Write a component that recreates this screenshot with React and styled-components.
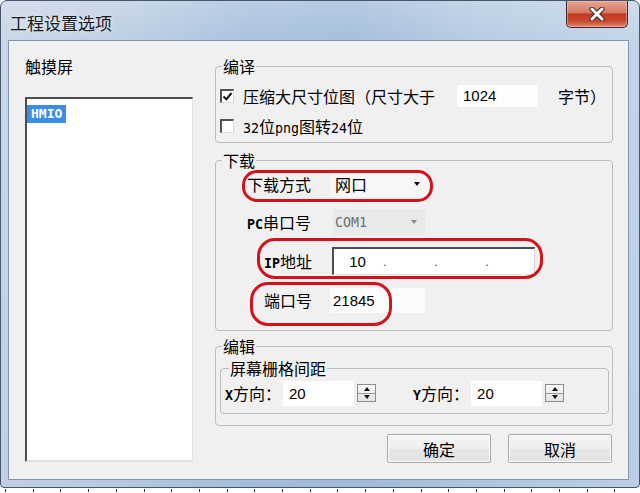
import React from "react";
import styled, { createGlobalStyle } from "styled-components";

const CJK = `"Noto Sans CJK SC", "Noto Sans", sans-serif`;
const MONO = `"DejaVu Sans Mono", "Liberation Mono", monospace`;
const NUM = `"Liberation Sans", Arial, sans-serif`;

const GlobalStyle = createGlobalStyle`
  html, body { margin: 0; padding: 0; background: #ffffff; }
  body { font-family: ${CJK}; width: 640px; height: 493px; overflow: hidden; color: #000; }
  * { box-sizing: border-box; }
`;

const Page = styled.div`
  width: 640px;
  height: 493px;
  display: flex;
  flex-direction: column;
`;

const Window = styled.div`
  position: relative;
  width: 640px;
  height: 488px;
  border: 1px solid #45566d;
  border-radius: 7px 7px 4px 4px;
  background:
    linear-gradient(to bottom, rgba(255,255,255,0.18), rgba(255,255,255,0) 40px, rgba(80,120,180,0.08) 100%),
    linear-gradient(to right, #cbd7e6 0%, #bfd0e4 18%, #abc3df 38%, #a6bfdc 55%, #b8cce3 75%, #c4d5e9 100%);
  display: flex;
  flex-direction: column;
  overflow: hidden;
`;

const TitleBar = styled.div`
  height: 39px;
  flex: none;
  display: flex;
  align-items: flex-start;
`;

const Title = styled.div`
  margin: 12px 0 0 9px;
  font-size: 17px;
  line-height: 20px;
  color: #1b1b1b;
  text-shadow: 0 0 6px rgba(255, 255, 255, 0.8);
`;

const CloseButton = styled.div`
  margin-left: auto;
  margin-right: 11px;
  width: 62px;
  height: 27px;
  border: 1px solid #3d2a2a;
  border-top: none;
  border-radius: 0 0 5px 5px;
  background: linear-gradient(to bottom, #e9a493 0%, #d57a65 44%, #c23a20 50%, #c84a31 78%, #e08a72 100%);
  box-shadow: inset 0 0 0 1px rgba(255, 200, 190, 0.45);
  display: flex;
  align-items: center;
  justify-content: center;
`;

const Client = styled.div`
  flex: 1;
  margin: 0 10px 7px 7px;
  border: 1px solid #8296ae;
  background: #f0f0f0;
  display: flex;
`;

const LeftPanel = styled.div`
  width: 206px;
  flex: none;
  padding: 16px 0 0 16px;
  display: flex;
  flex-direction: column;
`;

const PanelLabel = styled.div`
  font-size: 16px;
  line-height: 18px;
`;

const ListBox = styled.div`
  margin-top: 22px;
  width: 168px;
  height: 365px;
  background: #ffffff;
  border-top: 2px solid #4e4e4e;
  border-left: 2px solid #4e4e4e;
  border-right: 1px solid #e2e2e2;
  border-bottom: 2px solid #e2e2e2;
`;

const ListItem = styled.div`
  display: inline-block;
  height: 18px;
  line-height: 18px;
  padding: 0 4px;
  background: ${(p) => (p.$selected ? "#3a8ee6" : "transparent")};
  color: ${(p) => (p.$selected ? "#ffffff" : "#000")};
  font-family: ${MONO};
  font-weight: bold;
  font-size: 13px;
`;

const RightCol = styled.div`
  width: 398px;
  flex: none;
  padding-top: 16px;
  display: flex;
  flex-direction: column;
`;

const Group = styled.fieldset`
  margin: ${(p) => p.$mt || 0}px ${(p) => p.$mr || 0}px 0 0;
  padding: ${(p) => p.$pt || 0}px 0 ${(p) => p.$pb || 0}px 4px;
  border: 1px solid #bdbdbd;
  border-radius: 4px;
  min-width: 0;
`;

const Legend = styled.legend`
  font-size: 16px;
  line-height: 18px;
  padding: 0 1px;
  margin-left: ${(p) => p.$ml || 2}px;
`;

const CheckRow = styled.div`
  height: 30px;
  display: flex;
  align-items: center;
  font-size: 16px;
  white-space: nowrap;
`;

const CheckBox = styled.div`
  width: 14px;
  height: 14px;
  flex: none;
  background: #ffffff;
  border-top: 2px solid #505050;
  border-left: 2px solid #505050;
  border-right: 1px solid #dcdcdc;
  border-bottom: 1px solid #dcdcdc;
  display: flex;
  align-items: center;
  justify-content: center;
  margin-right: 9px;
`;

const Latin = styled.span`
  font-family: ${MONO};
  font-size: 13.3px;
  font-weight: ${(p) => (p.$bold ? "bold" : "normal")};
`;

const SizeInput = styled.div`
  margin-left: 22px;
  width: 81px;
  height: 22px;
  background: #fdfdfd;
  font-family: ${NUM};
  font-size: 15px;
  line-height: 22px;
  padding-left: 6px;
`;

const Suffix = styled.span`
  margin-left: 20px;
`;

const FormRow = styled.div`
  display: grid;
  grid-template-columns: 110px auto;
  align-items: center;
  height: ${(p) => p.$h || 26}px;
  margin-top: ${(p) => p.$mt || 0}px;
  font-size: 16px;
`;

const FormLabel = styled.div`
  padding-left: ${(p) => p.$indent}px;
  white-space: nowrap;
`;

const Combo = styled.div`
  display: flex;
  align-items: center;
  justify-content: space-between;
  height: 26px;
  width: ${(p) => (p.$disabled ? 92 : 98)}px;
  margin-left: ${(p) => (p.$disabled ? 3 : 0)}px;
  padding: 0 8px 0 ${(p) => (p.$disabled ? 2 : 5)}px;
  background: ${(p) => (p.$disabled ? "#e9e9e9" : "#f7f7f7")};
  color: ${(p) => (p.$disabled ? "#6e6e6e" : "#000")};
`;

const DownArrow = styled.span`
  width: 0;
  height: 0;
  border-left: 3.5px solid transparent;
  border-right: 3.5px solid transparent;
  border-top: 4px solid ${(p) => (p.$disabled ? "#8a8a8a" : "#111")};
`;

const IpBox = styled.div`
  margin-left: 2px;
  width: 203px;
  height: 28px;
  background: #ffffff;
  border-top: 2px solid #4d4d4d;
  border-left: 2px solid #4d4d4d;
  border-right: 1px solid #d4d4d4;
  border-bottom: 1px solid #e6e6e6;
  display: grid;
  grid-template-columns: 1fr 4px 1fr 4px 1fr 4px 1fr;
  align-items: center;
  font-family: ${NUM};
  font-size: 15px;
`;

const IpSeg = styled.span`
  text-align: center;
`;

const IpDot = styled.span`
  text-align: center;
  font-size: 12px;
  color: #333;
  transform: translateX(2px);
`;

const PortInput = styled.div`
  width: 95px;
  height: 25px;
  background: #fbfbfb;
  font-family: ${NUM};
  font-size: 15px;
  line-height: 25px;
  padding-left: 3px;
`;

const SpacingRow = styled.div`
  height: 24px;
  display: flex;
  align-items: center;
  font-size: 16px;
  white-space: nowrap;
`;

const SpacingField = styled.div`
  display: flex;
  align-items: center;
  margin-left: ${(p) => p.$ml || 0}px;
`;

const NumInput = styled.div`
  margin-left: 2px;
  width: 71px;
  height: 25px;
  background: #ffffff;
  font-family: ${NUM};
  font-size: 15px;
  line-height: 25px;
  padding-left: 6px;
`;

const Spin = styled.div`
  margin-left: 3px;
  width: 19px;
  height: 18px;
  border: 1px solid #8c8c8c;
  background: linear-gradient(to bottom, #f8f8f8, #e3e3e3);
  display: flex;
  flex-direction: column;
`;

const SpinHalf = styled.div`
  flex: 1;
  display: flex;
  align-items: center;
  justify-content: center;
  border-top: ${(p) => (p.$down ? "1px solid #9a9a9a" : "none")};
`;

const Tri = styled.span`
  width: 0;
  height: 0;
  border-left: 3.5px solid transparent;
  border-right: 3.5px solid transparent;
  ${(p) => (p.$down ? "border-top: 4px solid #111;" : "border-bottom: 4px solid #111;")}
`;

const ButtonRow = styled.div`
  margin-top: 8px;
  display: flex;
  justify-content: flex-end;
  gap: 17px;
  padding-right: 1px;
`;

const Button = styled.div`
  width: 104px;
  height: 29px;
  border: 1px solid #a9a9a9;
  border-radius: 2px;
  background: linear-gradient(to bottom, #f6f6f6 0%, #eeeeee 50%, #e6e6e6 51%, #e2e2e2 100%);
  box-shadow: inset 0 0 0 1px #fbfbfb;
  display: flex;
  align-items: center;
  justify-content: center;
  font-size: 16px;
`;

const Annotation = styled.div`
  position: absolute;
  border: 3px solid #d3121d;
  pointer-events: none;
`;

const Ticks = styled.div`
  height: 5px;
  background:
    repeating-linear-gradient(to right, transparent 0, transparent 5px, #2a2a2a 5px, #2a2a2a 6px, transparent 6px, transparent 27.7px);
  background-size: 100% 3px;
  background-position: 0 1px;
  background-repeat: repeat-x;
`;

function CloseX() {
  return (
    <svg width="20" height="14" viewBox="0 0 20 14">
      <path d="M5 2 L15 12 M15 2 L5 12" stroke="#3a2a2a" strokeWidth="5" strokeLinecap="round" />
      <path d="M5 2 L15 12 M15 2 L5 12" stroke="#ffffff" strokeWidth="3" strokeLinecap="round" />
    </svg>
  );
}

function Check() {
  return (
    <svg width="11" height="11" viewBox="0 0 11 11">
      <path d="M1.5 5.5 L4.3 8.3 L9.5 2" stroke="#111" strokeWidth="2" fill="none" />
    </svg>
  );
}

function SpinButton() {
  return (
    <Spin>
      <SpinHalf>
        <Tri />
      </SpinHalf>
      <SpinHalf $down>
        <Tri $down />
      </SpinHalf>
    </Spin>
  );
}

export default function App() {
  return (
    <Page>
      <GlobalStyle />
      <Window>
        <TitleBar>
          <Title>工程设置选项</Title>
          <CloseButton>
            <CloseX />
          </CloseButton>
        </TitleBar>
        <Client>
          <LeftPanel>
            <PanelLabel>触摸屏</PanelLabel>
            <ListBox>
              <ListItem $selected>HMIO</ListItem>
            </ListBox>
          </LeftPanel>
          <RightCol>
            <Group $pt={6} $pb={1}>
              <Legend>编译</Legend>
              <CheckRow>
                <CheckBox>
                  <Check />
                </CheckBox>
                <span>压缩大尺寸位图（尺寸大于</span>
                <SizeInput>1024</SizeInput>
                <Suffix>字节）</Suffix>
              </CheckRow>
              <CheckRow>
                <CheckBox />
                <span>
                  <Latin>32</Latin>位<Latin>png</Latin>图转<Latin>24</Latin>位
                </span>
              </CheckRow>
            </Group>

            <Group $mt={8} $pt={2} $pb={17}>
              <Legend>下载</Legend>
              <FormRow>
                <FormLabel $indent={27}>下载方式</FormLabel>
                <Combo>
                  <span>网口</span>
                  <DownArrow />
                </Combo>
              </FormRow>
              <FormRow $mt={12}>
                <FormLabel $indent={27}>
                  <Latin $bold>PC</Latin>串口号
                </FormLabel>
                <Combo $disabled>
                  <Latin>COM1</Latin>
                  <DownArrow $disabled />
                </Combo>
              </FormRow>
              <FormRow $mt={12} $h={28}>
                <FormLabel $indent={44}>
                  <Latin $bold>IP</Latin>地址
                </FormLabel>
                <IpBox>
                  <IpSeg>10</IpSeg>
                  <IpDot>.</IpDot>
                  <IpSeg />
                  <IpDot>.</IpDot>
                  <IpSeg />
                  <IpDot>.</IpDot>
                  <IpSeg />
                </IpBox>
              </FormRow>
              <FormRow $mt={12}>
                <FormLabel $indent={44}>端口号</FormLabel>
                <PortInput>21845</PortInput>
              </FormRow>
            </Group>

            <Group $mt={6} $pb={11}>
              <Legend>编辑</Legend>
              <Group $mt={4} $mr={3} $pt={4} $pb={8}>
                <Legend $ml={4}>屏幕栅格间距</Legend>
                <SpacingRow>
                  <SpacingField>
                    <span>
                      <Latin $bold>X</Latin>方向：
                    </span>
                    <NumInput>20</NumInput>
                    <SpinButton />
                  </SpacingField>
                  <SpacingField $ml={37}>
                    <span>
                      <Latin $bold>Y</Latin>方向：
                    </span>
                    <NumInput>20</NumInput>
                    <SpinButton />
                  </SpacingField>
                </SpacingRow>
              </Group>
            </Group>

            <ButtonRow>
              <Button>确定</Button>
              <Button>取消</Button>
            </ButtonRow>
          </RightCol>
        </Client>

        <Annotation style={{ left: 241, top: 169, width: 191, height: 32, borderRadius: 15 }} />
        <Annotation style={{ left: 256, top: 237, width: 286, height: 41, borderRadius: 18 }} />
        <Annotation style={{ left: 249, top: 281, width: 142, height: 44, borderRadius: 18 }} />
      </Window>
      <Ticks />
    </Page>
  );
}
